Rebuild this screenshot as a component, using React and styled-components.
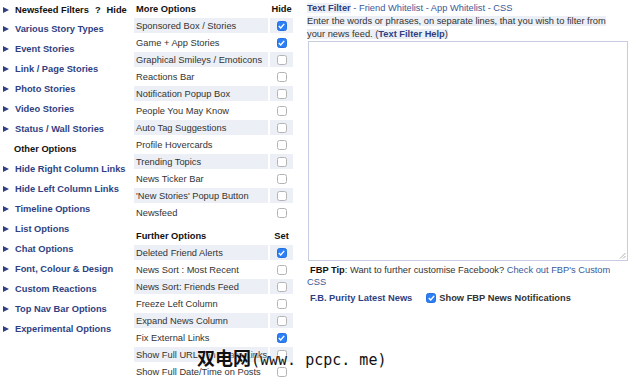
import React from "react";
import styled, { createGlobalStyle } from "styled-components";

const GlobalStyle = createGlobalStyle`
  html, body {
    margin: 0;
    padding: 0;
    background: #fff;
  }
  body {
    font-family: "Liberation Sans", Arial, sans-serif;
    font-size: 9.3px;
    color: #333;
  }
`;

const Page = styled.main`
  position: relative;
  display: grid;
  grid-template-columns: 134px 160px 1fr;
  width: 640px;
  height: 385px;
  overflow: hidden;
`;

const NavColumn = styled.nav`
  display: flex;
  flex-direction: column;
  padding: 0 0 0 3px;
`;

const NavHeader = styled.div`
  display: flex;
  align-items: center;
  height: 19px;
  font-weight: bold;
  color: #111;
  gap: 6px;
`;

const NavItem = styled.div`
  display: flex;
  align-items: center;
  height: 20px;
  font-weight: bold;
  color: ${(p) => (p.$plain ? "#111" : "#2f3f82")};
  padding-left: ${(p) => (p.$plain ? "11px" : "0")};
`;

const Arrow = styled.span`
  display: inline-block;
  width: 0;
  height: 0;
  border-top: 3.5px solid transparent;
  border-bottom: 3.5px solid transparent;
  border-left: 6px solid ${(p) => p.$color || "#2f3f82"};
  margin-right: 6px;
`;

const Middle = styled.section`
  display: flex;
  flex-direction: column;
  padding-top: 1px;
`;

const OptionTable = styled.div`
  display: flex;
  flex-direction: column;
  gap: 2px;
  margin-bottom: ${(p) => p.$gap || "0"};
`;

const Row = styled.div`
  display: grid;
  grid-template-columns: 134px 23px;
  column-gap: 2px;
  height: 15px;
`;

const Label = styled.div`
  display: flex;
  align-items: center;
  padding-left: 2px;
  white-space: nowrap;
  overflow: hidden;
  background: ${(p) => (p.$shade ? "#eceff5" : "transparent")};
  color: ${(p) => (p.$head ? "#111" : "#333")};
  font-weight: ${(p) => (p.$head ? "bold" : "normal")};
`;

const BoxCell = styled.div`
  display: flex;
  align-items: center;
  justify-content: center;
  background: ${(p) => (p.$shade ? "#eceff5" : "transparent")};
  color: #111;
  font-weight: bold;
`;

const Box = styled.span`
  display: inline-flex;
  align-items: center;
  justify-content: center;
  box-sizing: border-box;
  width: 10px;
  height: 10px;
  border-radius: 2.5px;
  background: ${(p) => (p.$on ? "#2d7ff6" : "#fff")};
  border: 1px solid ${(p) => (p.$on ? "#2470e0" : "#b4b4b4")};
`;

const Right = styled.section`
  display: flex;
  flex-direction: column;
  padding: 2px 13px 0 13px;
`;

const TabLine = styled.div`
  line-height: 13px;
  color: #3b5998;
`;

const Shade = styled.span`
  background: #eceff5;
  font-weight: ${(p) => (p.$bold ? "bold" : "normal")};
  color: ${(p) => (p.$color || "inherit")};
`;

const Intro = styled.div`
  line-height: 13px;
  color: #333;
  padding-right: 20px;
`;

const LinkBold = styled.span`
  font-weight: bold;
  color: #2f3f82;
`;

const FilterBox = styled.div`
  position: relative;
  box-sizing: border-box;
  width: 320px;
  height: 220px;
  margin: 0 0 0 1px;
  border: 1px solid #c7cde0;
  background: #fff;
`;

const Grip = styled.svg`
  position: absolute;
  right: 1px;
  bottom: 1px;
`;

const Tip = styled.div`
  margin-top: 3px;
  line-height: 12px;
  color: #333;
  text-indent: 3px;
  padding-right: 6px;
`;

const TipLabel = styled.b`
  color: #111;
`;

const TipLink = styled.span`
  color: #3b5998;
`;

const NewsRow = styled.div`
  display: flex;
  align-items: center;
  margin-top: 5px;
  padding-left: 3px;
  gap: 14px;
  font-weight: bold;
`;

const NewsTitle = styled.span`
  color: #2f3f82;
`;

const NewsCheck = styled.label`
  display: flex;
  align-items: center;
  gap: 3px;
  color: #333;
`;

const Watermark = styled.div`
  position: absolute;
  left: 197px;
  top: 344px;
  display: flex;
  align-items: baseline;
  white-space: nowrap;
  color: #111;
  text-shadow: 0 0 2px #fff, 0 0 2px #fff;
`;

const MarkCjk = styled.span`
  font-family: "Noto Sans CJK SC", sans-serif;
  font-size: 18px;
  font-weight: bold;
`;

const MarkLatin = styled.span`
  font-family: "DejaVu Sans Mono", "Liberation Mono", monospace;
  font-size: 15px;
`;

function Check({ on }) {
  return (
    <Box $on={on}>
      {on && (
        <svg width="7" height="6" viewBox="0 0 7 6">
          <path d="M0.8 3.1 L2.7 5 L6.2 0.9" fill="none" stroke="#fff" strokeWidth="1.4" />
        </svg>
      )}
    </Box>
  );
}

const navLinks = [
  "Various Story Types",
  "Event Stories",
  "Link / Page Stories",
  "Photo Stories",
  "Video Stories",
  "Status / Wall Stories",
];

const navLinks2 = [
  "Hide Right Column Links",
  "Hide Left Column Links",
  "Timeline Options",
  "List Options",
  "Chat Options",
  "Font, Colour & Design",
  "Custom Reactions",
  "Top Nav Bar Options",
  "Experimental Options",
];

const moreOptions = [
  ["Sponsored Box / Stories", true],
  ["Game + App Stories", true],
  ["Graphical Smileys / Emoticons", false],
  ["Reactions Bar", false],
  ["Notification Popup Box", false],
  ["People You May Know", false],
  ["Auto Tag Suggestions", false],
  ["Profile Hovercards", false],
  ["Trending Topics", false],
  ["News Ticker Bar", false],
  ["'New Stories' Popup Button", false],
  ["Newsfeed", false],
];

const furtherOptions = [
  ["Deleted Friend Alerts", true],
  ["News Sort : Most Recent", false],
  ["News Sort: Friends Feed", false],
  ["Freeze Left Column", false],
  ["Expand News Column", false],
  ["Fix External Links", true],
  ["Show Full URLs on Share Links", false],
  ["Show Full Date/Time on Posts", false],
];

function Options({ title, head, items, gap }) {
  return (
    <OptionTable $gap={gap}>
      <Row>
        <Label $head>{title}</Label>
        <BoxCell>{head}</BoxCell>
      </Row>
      {items.map(([name, on], i) => (
        <Row key={name}>
          <Label $shade={i % 2 === 0}>{name}</Label>
          <BoxCell $shade={i % 2 === 0}>
            <Check on={on} />
          </BoxCell>
        </Row>
      ))}
    </OptionTable>
  );
}

export default function App() {
  return (
    <>
      <GlobalStyle />
      <Page>
        <NavColumn>
          <NavHeader>
            <span>
              <Arrow $color="#2f3f82" />
              Newsfeed Filters
            </span>
            <span>?</span>
            <span>Hide</span>
          </NavHeader>
          {navLinks.map((n) => (
            <NavItem key={n}>
              <Arrow />
              {n}
            </NavItem>
          ))}
          <NavItem $plain>Other Options</NavItem>
          {navLinks2.map((n) => (
            <NavItem key={n}>
              <Arrow />
              {n}
            </NavItem>
          ))}
        </NavColumn>

        <Middle>
          <Options title="More Options" head="Hide" items={moreOptions} gap="8px" />
          <Options title="Further Options" head="Set" items={furtherOptions} />
        </Middle>

        <Right>
          <TabLine>
            <Shade $bold $color="#2f3f82">Text Filter</Shade> - Friend Whitelist - App Whitelist - CSS
          </TabLine>
          <Intro>
            <Shade>
              Enter the words or phrases, on separate lines, that you wish to filter from your news
              feed. (<LinkBold>Text Filter Help</LinkBold>)
            </Shade>
          </Intro>
          <FilterBox>
            <Grip width="7" height="7" viewBox="0 0 7 7">
              <path d="M6.5 1 L1 6.5 M6.5 4 L4 6.5" stroke="#999" strokeWidth="0.8" />
            </Grip>
          </FilterBox>
          <Tip>
            <TipLabel>FBP Tip</TipLabel>: Want to further customise Facebook?{" "}
            <TipLink>Check out FBP's Custom CSS</TipLink>
          </Tip>
          <NewsRow>
            <NewsTitle>F.B. Purity Latest News</NewsTitle>
            <NewsCheck>
              <Check on />
              Show FBP News Notifications
            </NewsCheck>
          </NewsRow>
        </Right>

        <Watermark>
          <MarkCjk>双电网</MarkCjk>
          <MarkLatin>(www. pcpc. me)</MarkLatin>
        </Watermark>
      </Page>
    </>
  );
}
